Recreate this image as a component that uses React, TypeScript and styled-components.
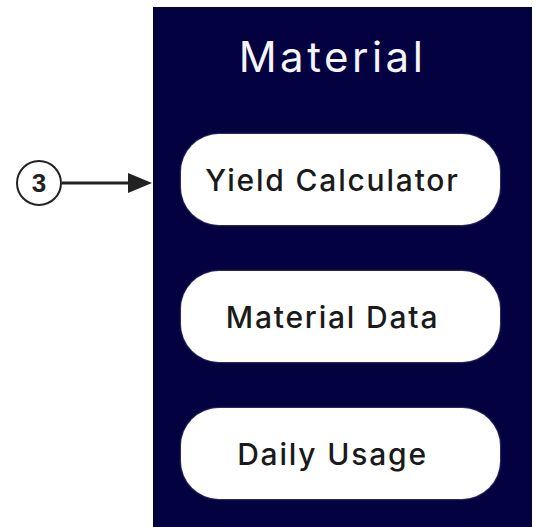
import React from "react";
import styled, { createGlobalStyle } from "styled-components";

const GlobalStyle = createGlobalStyle`
	html, body {
		margin: 0;
		padding: 0;
		background: #ffffff;
	}
`;

const Page = styled.div`
	display: flex;
	align-items: flex-start;
	width: 537px;
	height: 527px;
	overflow: hidden;
`;

const Callout = styled.div`
	display: flex;
	align-items: center;
	width: 153px;
	margin-top: 160px;
	padding-left: 16px;
	box-sizing: border-box;
`;

const Badge = styled.div`
	width: 46px;
	height: 46px;
	box-sizing: border-box;
	border: 2px solid #222222;
	border-radius: 50%;
	display: flex;
	align-items: center;
	justify-content: center;
	flex-shrink: 0;
	font-family: "Liberation Sans", Arial, sans-serif;
	font-weight: bold;
	font-size: 26px;
	color: #222222;
`;

const Pointer = styled.svg`
	flex: 1;
	height: 22px;
	display: block;
`;

const Panel = styled.div`
	width: 379px;
	height: 520px;
	margin-top: 7px;
	background: #03013f;
	display: flex;
	flex-direction: column;
	padding: 29px 32px 0 28px;
	box-sizing: border-box;
`;

const Title = styled.h1`
	margin: 0 0 57px;
	padding-right: 16px;
	text-align: center;
	font-family: Inter, "Open Sans", sans-serif;
	font-weight: 400;
	font-size: 42px;
	line-height: 41px;
	letter-spacing: 3.5px;
	color: #f4f4fa;
`;

const Menu = styled.nav`
	display: flex;
	flex-direction: column;
	gap: 46px;
`;

const MenuButton = styled.button`
	height: 91px;
	border: none;
	border-radius: 38px;
	background: #ffffff;
	padding: 0 16px 0 0;
	font-family: Inter, "Open Sans", sans-serif;
	font-weight: 500;
	font-size: 30px;
	letter-spacing: 1.8px;
	color: #1a1a1a;
	cursor: pointer;
	box-shadow: 0 0 2px rgba(255, 255, 255, 0.6);
`;

const items = ["Yield Calculator", "Material Data", "Daily Usage"];

export default function App() {
	return (
		<Page>
			<GlobalStyle />
			<Callout>
				<Badge>3</Badge>
				<Pointer viewBox="0 0 91 22" preserveAspectRatio="none">
					<line x1="0" y1="11" x2="68" y2="11" stroke="#222222" strokeWidth="3" />
					<polygon points="66,1 90,11 66,21" fill="#222222" />
				</Pointer>
			</Callout>
			<Panel>
				<Title>Material</Title>
				<Menu>
					{items.map((label) => (
						<MenuButton key={label}>{label}</MenuButton>
					))}
				</Menu>
			</Panel>
		</Page>
	);
}
